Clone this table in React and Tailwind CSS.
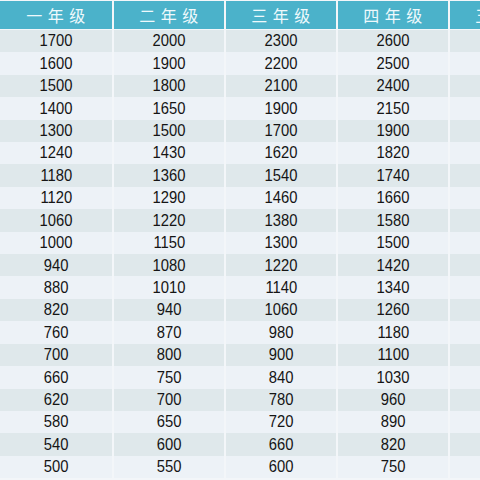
import React from "react";

const grades = ["一年级", "二年级", "三年级", "四年级", "五年级"];

const rows = [
  [1700, 2000, 2300, 2600],
  [1600, 1900, 2200, 2500],
  [1500, 1800, 2100, 2400],
  [1400, 1650, 1900, 2150],
  [1300, 1500, 1700, 1900],
  [1240, 1430, 1620, 1820],
  [1180, 1360, 1540, 1740],
  [1120, 1290, 1460, 1660],
  [1060, 1220, 1380, 1580],
  [1000, 1150, 1300, 1500],
  [940, 1080, 1220, 1420],
  [880, 1010, 1140, 1340],
  [820, 940, 1060, 1260],
  [760, 870, 980, 1180],
  [700, 800, 900, 1100],
  [660, 750, 840, 1030],
  [620, 700, 780, 960],
  [580, 650, 720, 890],
  [540, 600, 660, 820],
  [500, 550, 600, 750],
];

const cols = "grid grid-cols-[112px_110px_110px_110px_110px] gap-x-[2px]";

export default function App() {
  return (
    <div className="w-[480px] h-[480px] overflow-hidden bg-[#f3f6f9] pt-[1px] font-['Liberation_Sans','Noto_Sans_CJK_SC',sans-serif]">
      <div className="w-[560px]">
        <div className={cols}>
          {grades.map((g) => (
            <div
              key={g}
              className="h-[28px] bg-[#4bb2ca] flex items-center justify-center text-[16px] text-[#eef9fc] tracking-[5.5px] pl-[5px] font-['Noto_Sans_CJK_SC',sans-serif]"
            >
              {g}
            </div>
          ))}
        </div>
        <div className="mt-[1px]">
          {rows.map((r, i) => (
            <div key={i} className={cols}>
              {[...r, ""].map((v, j) => (
                <div
                  key={j}
                  className={`h-[22.42px] flex items-center justify-center text-[17px] text-[#151515] ${
                    i % 2 === 0 ? "bg-[#dfe8eb]" : "bg-[#edf2f7]"
                  }`}
                >
                  <span className="inline-block scale-x-[0.87]">{v}</span>
                </div>
              ))}
            </div>
          ))}
        </div>
      </div>
    </div>
  );
}
